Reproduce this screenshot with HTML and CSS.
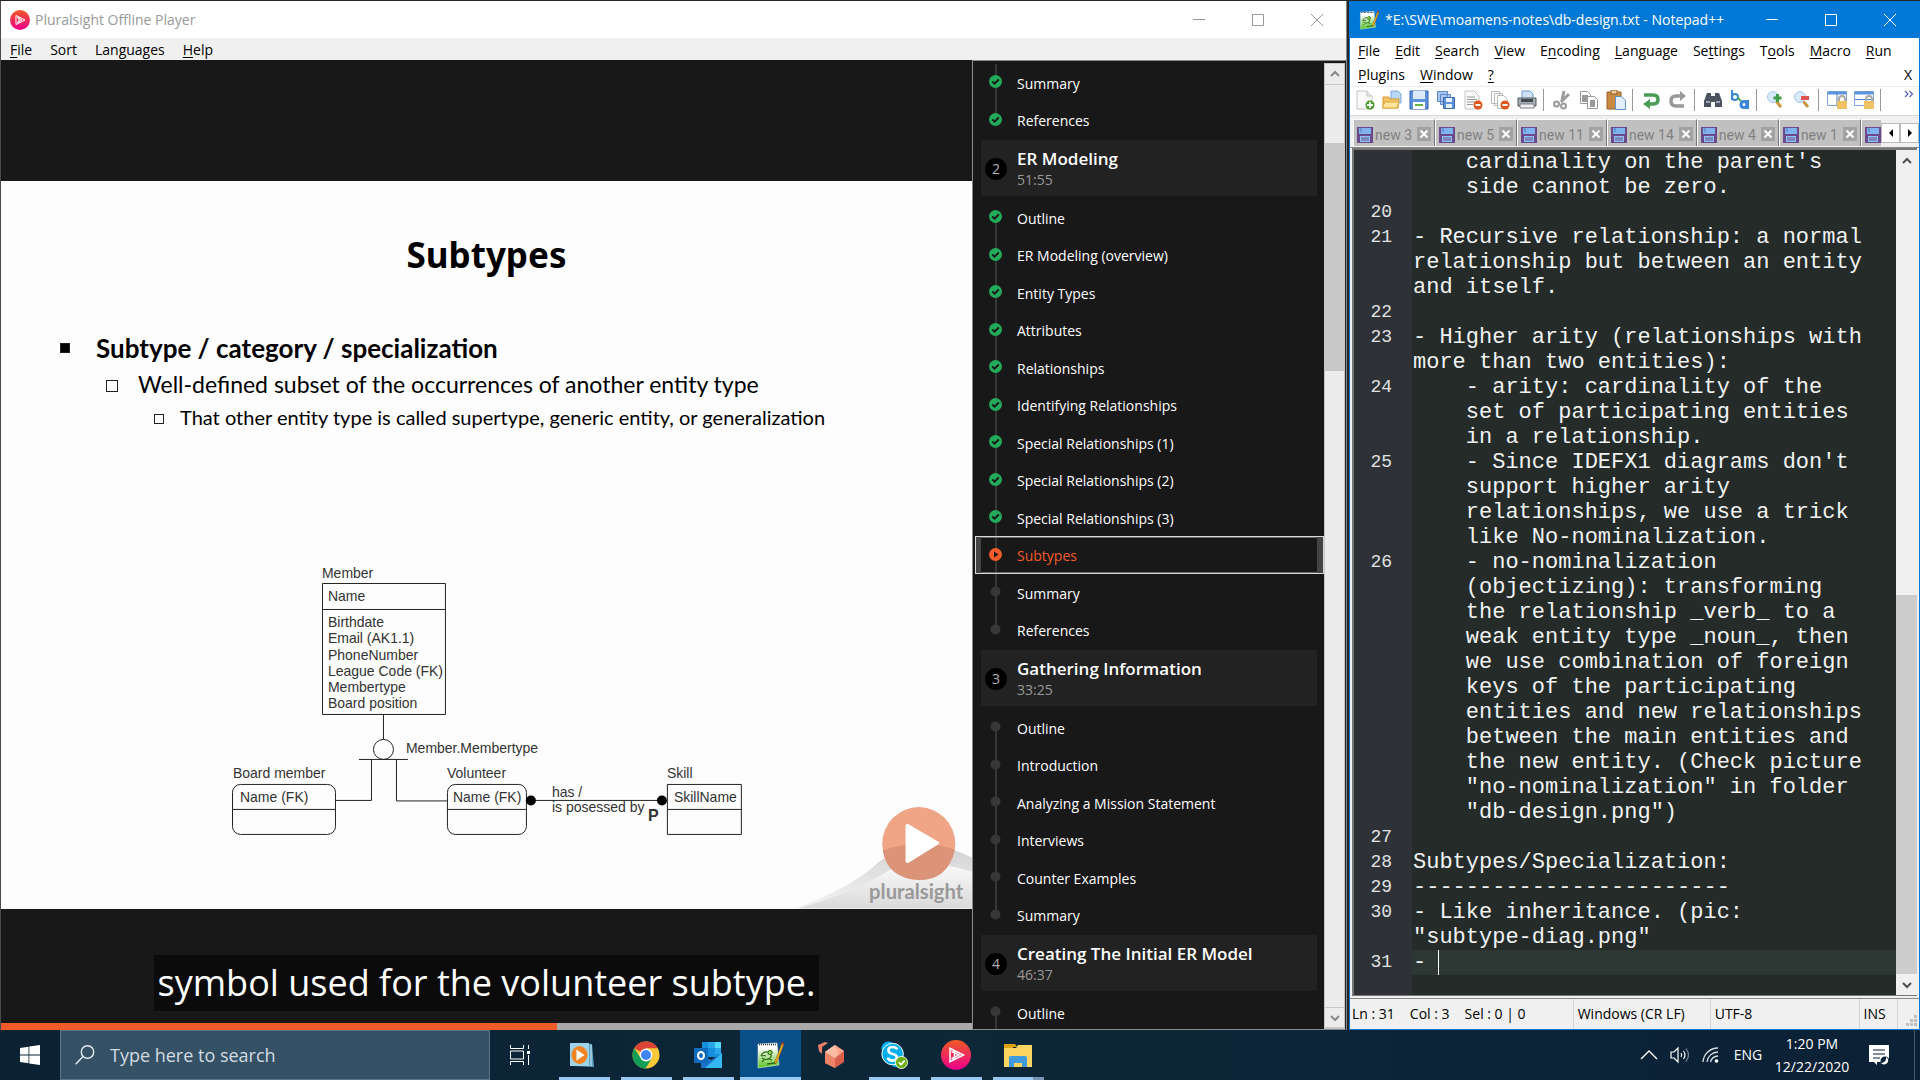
FILE: index.html
```html
<!DOCTYPE html>
<html lang="en">
<head>
<meta charset="utf-8">
<title>Desktop</title>
<link rel="stylesheet" href="styles.css">
</head>
<body>
<svg class="defs" aria-hidden="true">
  <defs>
    <linearGradient id="gPink" x1="0" y1="0" x2="0" y2="1"><stop offset="0" stop-color="#f15a24"/><stop offset="1" stop-color="#ec008c"/></linearGradient>
    <linearGradient id="gHill" x1="0" y1="0" x2="0" y2="1"><stop offset="0" stop-color="#d2d2d2"/><stop offset="1" stop-color="#f4f4f4"/></linearGradient>
    <linearGradient id="gHill2" x1="0" y1="0" x2="0" y2="1"><stop offset="0" stop-color="#fafafa"/><stop offset="1" stop-color="#dadada"/></linearGradient>
    <linearGradient id="gNote" x1="0" y1="0" x2="0" y2="1"><stop offset=".2" stop-color="#fff"/><stop offset="1" stop-color="#58c322"/></linearGradient>
  </defs>
  <symbol id="done" viewBox="0 0 13 13"><circle cx="6.500" cy="6.500" r="6.500" fill="#23aa5a"/><path d="M3.300 6.500l2.300 2.200 4.200-4.200" fill="none" stroke="#181818" stroke-width="1.900"/></symbol>
  <symbol id="now" viewBox="0 0 13 13"><circle cx="6.500" cy="6.500" r="6.500" fill="#f15b2a"/><path d="M5 3.500v6l4.500-3z" fill="#181818"/></symbol>
  <symbol id="todo" viewBox="0 0 13 13"><circle cx="6.500" cy="6.500" r="5" fill="#373737"/></symbol>
  <symbol id="min" viewBox="0 0 12 12"><path d="M0 5.500h12" stroke="currentColor" fill="none"/></symbol>
  <symbol id="max" viewBox="0 0 12 12"><path d="M.5.5h11v11H.5z" stroke="currentColor" fill="none"/></symbol>
  <symbol id="cls" viewBox="0 0 12 12"><path d="M0 0l12 12M12 0L0 12" stroke="currentColor" fill="none"/></symbol>
  <symbol id="up" viewBox="0 0 10 10"><path d="M1 7l4-4 4 4" stroke="currentColor" stroke-width="2" fill="none"/></symbol>
  <symbol id="down" viewBox="0 0 10 10"><path d="M1 3l4 4 4-4" stroke="currentColor" stroke-width="2" fill="none"/></symbol>
  <symbol id="disk" viewBox="0 0 16 16"><path d="M0 0h16v16H0z" fill="#6b4a8c"/><path d="M2 1h12v6H2z" fill="#7fb4ee"/><path d="M3 9h10v6H3z" fill="#8ec4f4"/><path d="M4 11h8M4 13h8" stroke="#6b4a8c"/><path d="M4 1v4" stroke="#5577bb"/></symbol>
  <symbol id="tabx" viewBox="0 0 14 14"><path d="M0 0h14v14H0z" fill="#a2a2a2"/><path d="M3.500 3.500l7 7M10.500 3.500l-7 7" stroke="#fff" stroke-width="2"/></symbol>
  <symbol id="logo" viewBox="0 0 20 20"><circle cx="10" cy="10" r="10" fill="url(#gPink)"/><path d="M6 5.500v9l9-4.500zM7 7.500l5 2.500-5 2.500M9 6.800v6.400" fill="none" stroke="#fff" stroke-width="1"/></symbol>
  <symbol id="npp" viewBox="0 0 28 28"><path d="M2 3l19-1 2 22-21 3z" fill="url(#gNote)" stroke="#dfe8da" stroke-width=".6"/><path d="M3 3.500h18" stroke="#333" stroke-width="1.500" stroke-dasharray="1 1"/><path d="M5 15q2-5 7-4 4-3 4 1l-3 1q4 1 1 4-4 3-8 0M5 15q3-1 5 0M8 19l-2 2M13 18l3 1" fill="none" stroke="#2f6a16" stroke-width="1.200"/><circle cx="14" cy="11.500" r="2" fill="#8fdc4e" stroke="#2f6a16"/><path d="M11 23l8-1" stroke="#2c6a1c" stroke-width="1.500"/><path d="M26 2l2 1-7 18-2 2v-3z" fill="#f0ab1d" stroke="#7a5210" stroke-width=".5"/><path d="M26 1l2 1-.5 2-2-1z" fill="#a33"/></symbol>
</svg>

<main class="desktop">
  <section class="win player" aria-label="Pluralsight Offline Player">
    <header class="titlebar">
      <svg class="appicon"><use href="#logo"/></svg>
      <h1 class="wintitle">Pluralsight Offline Player</h1>
      <div class="winctl">
        <button aria-label="Minimize"><svg><use href="#min"/></svg></button>
        <button aria-label="Maximize"><svg><use href="#max"/></svg></button>
        <button aria-label="Close"><svg><use href="#cls"/></svg></button>
      </div>
    </header>
    <nav class="menubar">
      <button><u>F</u>ile</button><button>Sort</button><button>Languages</button><button><u>H</u>elp</button>
    </nav>
    <div class="playbody">
      <div class="video">
        <div class="band"></div>
        <article class="slide">
          <h2>Subtypes</h2>
          <ul class="bullets">
            <li class="b1">Subtype / category / specialization</li>
            <li class="b2">Well-defined subset of the occurrences of another entity type</li>
            <li class="b3">That other entity type is called supertype, generic entity, or generalization</li>
          </ul>
          <svg class="diagram" viewBox="220 560 540 290">
            <g class="line">
              <path d="M322.500 583.500h123v131h-123zM322.500 609.500h123M383.500 714.500v25M359 759.500h49M371.500 759.500v41h-36M396.500 759.500v41.500h50.500M526 800.500h141M667.500 784.500h74v50h-74zM667.500 809.500h74M233 809.500h102.500M447 809.500h79"/>
              <circle cx="383.500" cy="749.500" r="10"/>
              <rect x="232.500" y="784.500" width="103" height="50" rx="8"/>
              <rect x="447.500" y="784.500" width="79" height="50" rx="8"/>
            </g>
            <circle cx="531" cy="800.500" r="5"/><circle cx="662" cy="800.500" r="5"/>
            <g class="lbl">
              <text x="322" y="578">Member</text><text x="328" y="601">Name</text>
              <text x="328" y="627">Birthdate</text><text x="328" y="643">Email (AK1.1)</text><text x="328" y="660">PhoneNumber</text>
              <text x="328" y="676">League Code (FK)</text><text x="328" y="692">Membertype</text><text x="328" y="708">Board position</text>
              <text x="406" y="753">Member.Membertype</text>
              <text x="233" y="778">Board member</text><text x="240" y="802">Name (FK)</text>
              <text x="447" y="778">Volunteer</text><text x="453" y="802">Name (FK)</text>
              <text x="552" y="797">has /</text><text x="552" y="812">is posessed by</text>
              <text x="667" y="778">Skill</text><text x="674" y="802">SkillName</text>
              <text class="big" x="648" y="821">P</text>
            </g>
          </svg>
          <svg class="brand" viewBox="790 800 182 108">
            <path d="M795 908Q850 890 880 862 920 832 972 858V908z" fill="url(#gHill)"/>
            <path d="M800 908Q860 890 890 870 930 858 972 872V908z" fill="url(#gHill2)"/>
            <circle cx="919" cy="844" r="36" fill="#efa586"/>
            <path d="M883.500 851Q920 838 954.500 850 948 880 919 880 888 878 883.500 851z" fill="#dc9479"/>
            <path d="M906 827q0-3 3-2l29 17q2 1.500 0 3l-29 18q-3 1-3-2z" fill="#fff"/>
            <text x="870" y="899">pluralsight</text>
          </svg>
        </article>
        <div class="lower"><p class="caption">symbol used for the volunteer subtype.</p></div>
        <div class="seek"><div class="seekfill" style="width:57.3%"></div></div>
      </div>
      <aside class="toc">
        <div class="toclist">
          <ul class="clips">
            <li><svg><use href="#done"/></svg><a href="#c">Summary</a></li>
            <li class="last"><svg><use href="#done"/></svg><a href="#c">References</a></li>
          </ul>
          <div class="module"><span class="num">2</span><div><h3>ER Modeling</h3><p>51:55</p></div></div>
          <ul class="clips">
            <li class="first"><svg><use href="#done"/></svg><a href="#c">Outline</a></li>
            <li><svg><use href="#done"/></svg><a href="#c">ER Modeling (overview)</a></li>
            <li><svg><use href="#done"/></svg><a href="#c">Entity Types</a></li>
            <li><svg><use href="#done"/></svg><a href="#c">Attributes</a></li>
            <li><svg><use href="#done"/></svg><a href="#c">Relationships</a></li>
            <li><svg><use href="#done"/></svg><a href="#c">Identifying Relationships</a></li>
            <li><svg><use href="#done"/></svg><a href="#c">Special Relationships (1)</a></li>
            <li><svg><use href="#done"/></svg><a href="#c">Special Relationships (2)</a></li>
            <li><svg><use href="#done"/></svg><a href="#c">Special Relationships (3)</a></li>
            <li class="sel"><svg><use href="#now"/></svg><a href="#c">Subtypes</a></li>
            <li><svg><use href="#todo"/></svg><a href="#c">Summary</a></li>
            <li class="last"><svg><use href="#todo"/></svg><a href="#c">References</a></li>
          </ul>
          <div class="module"><span class="num">3</span><div><h3>Gathering Information</h3><p>33:25</p></div></div>
          <ul class="clips">
            <li class="first"><svg><use href="#todo"/></svg><a href="#c">Outline</a></li>
            <li><svg><use href="#todo"/></svg><a href="#c">Introduction</a></li>
            <li><svg><use href="#todo"/></svg><a href="#c">Analyzing a Mission Statement</a></li>
            <li><svg><use href="#todo"/></svg><a href="#c">Interviews</a></li>
            <li><svg><use href="#todo"/></svg><a href="#c">Counter Examples</a></li>
            <li class="last"><svg><use href="#todo"/></svg><a href="#c">Summary</a></li>
          </ul>
          <div class="module"><span class="num">4</span><div><h3>Creating The Initial ER Model</h3><p>46:37</p></div></div>
          <ul class="clips">
            <li class="first"><svg><use href="#todo"/></svg><a href="#c">Outline</a></li>
          </ul>
        </div>
        <div class="scroll raised">
          <button aria-label="Scroll up"><svg><use href="#up"/></svg></button>
          <div class="gap1"></div><div class="thumb1"></div><div class="rest"></div>
          <button aria-label="Scroll down"><svg><use href="#down"/></svg></button>
        </div>
      </aside>
    </div>
  </section>

  <section class="win notepad" aria-label="Notepad++">
    <header class="titlebar">
      <svg class="appicon"><use href="#npp"/></svg>
      <h1 class="wintitle">*E:\SWE\moamens-notes\db-design.txt - Notepad++</h1>
      <div class="winctl">
        <button aria-label="Minimize"><svg><use href="#min"/></svg></button>
        <button aria-label="Maximize"><svg><use href="#max"/></svg></button>
        <button aria-label="Close"><svg><use href="#cls"/></svg></button>
      </div>
    </header>
    <nav class="menubar">
      <button><u>F</u>ile</button><button><u>E</u>dit</button><button><u>S</u>earch</button><button><u>V</u>iew</button><button>E<u>n</u>coding</button><button><u>L</u>anguage</button><button>Se<u>t</u>tings</button><button>T<u>o</u>ols</button><button><u>M</u>acro</button><button><u>R</u>un</button>
      <span class="break"></span>
      <button><u>P</u>lugins</button><button><u>W</u>indow</button><button><u>?</u></button><button class="closedoc">X</button>
    </nav>
    <div class="toolbar">
      <button aria-label="New"><svg viewBox="0 0 20 20"><path d="M2 1h10l5 5v13H2z" fill="#fafafa" stroke="#c4c4c4"/><path d="M12 1v5h5" fill="#e8e8e8" stroke="#c4c4c4"/><circle cx="15" cy="15" r="4.500" fill="#4a9a2a"/><path d="M15 12v6M12 15h6" stroke="#fff" stroke-width="1.800"/></svg></button>
      <button aria-label="Open"><svg viewBox="0 0 20 20"><path d="M9 1h7l3 3v9H9z" fill="#b8d6f6" stroke="#7ea8da"/><path d="M1 7h6l1 2h9l-1 9H1z" fill="#f3c565" stroke="#d49a30"/><path d="M0 18l3-6h14l-2 6z" fill="#ffe49b" stroke="#dfa83d"/></svg></button>
      <button aria-label="Save"><svg viewBox="0 0 20 20"><path d="M1 1h18v18H1z" fill="#5f92dc" stroke="#2f5fae"/><path d="M4 1h12v8H4z" fill="#dbeafa"/><path d="M4 12h12v7H4z" fill="#fff"/><path d="M6 15h8" stroke="#62b34a" stroke-width="2"/></svg></button>
      <button aria-label="Save all"><svg viewBox="0 0 20 20"><path d="M1.500 1.500h10v10h-10zM4.500 4.500h10v10h-10z" fill="#a9c8f0" stroke="#5c86c8"/><path d="M7.500 7.500h11v11h-11z" fill="#5f92dc" stroke="#3c69b4"/><path d="M10 8h6v4h-6zM10 14h6v4h-6z" fill="#e6f1fc"/></svg></button>
      <button aria-label="Close file"><svg viewBox="0 0 20 20"><path d="M2 1h9l5 5v13H2z" fill="#fafafa" stroke="#c4c4c4"/><path d="M4 7h8M4 9.500h10M4 12h8M4 14.500h6" stroke="#999"/><circle cx="15" cy="15" r="4.500" fill="#e2561c"/><path d="M12.500 15h5" stroke="#fff" stroke-width="2"/></svg></button>
      <button aria-label="Close all"><svg viewBox="0 0 20 20"><path d="M1.500 1.500h8v12h-8zM4.500 3.500h8v12h-8z" fill="#fff" stroke="#bbb"/><path d="M7.500 5.500h6l4 4v9h-10z" fill="#fff" stroke="#bbb"/><circle cx="15" cy="15" r="4.500" fill="#e2561c"/><path d="M12.500 15h5" stroke="#fff" stroke-width="2"/></svg></button>
      <button aria-label="Print"><svg viewBox="0 0 20 20"><path d="M5 1h8l3 3v6H5z" fill="#cfe3f8" stroke="#6d9bd3"/><path d="M1 8h18v8H1z" fill="#a9aeb4" stroke="#50565e"/><path d="M4 9h12v3H4z" fill="#444a52"/><path d="M3 14h14v4H3z" fill="#f1f1f1" stroke="#7a7f86"/></svg></button>
      <i></i>
      <button aria-label="Cut"><svg viewBox="0 0 20 20"><path d="M12 1l-2 9M17 4l-8 8" stroke="#9b9b9b" stroke-width="3"/><g fill="none" stroke="#9b9b9b" stroke-width="2"><circle cx="4.500" cy="14" r="2.500"/><circle cx="11.500" cy="16" r="2.500"/></g></svg></button>
      <button aria-label="Copy"><svg viewBox="0 0 20 20"><path d="M1.500 1.500h7l3 3v9h-10z" fill="#fff" stroke="#999"/><path d="M3 5h6v7H3z" fill="#999"/><path d="M8.500 6.500h7l3 3v9h-10z" fill="#fff" stroke="#999"/><path d="M11 10h5v7h-5z" fill="#999"/></svg></button>
      <button aria-label="Paste"><svg viewBox="0 0 20 20"><path d="M1 2h14v17H1z" fill="#c98a42" stroke="#96602a"/><path d="M5 0h6v4H5z" fill="#e9cf9a" stroke="#96602a"/><path d="M9.500 6.500h6l4 4v9h-10z" fill="#e3effc" stroke="#5f8fd0"/></svg></button>
      <i></i>
      <button aria-label="Undo"><svg viewBox="0 0 20 20"><path d="M3 5h9q5 0 5 4.500T12 14H7" fill="none" stroke="#4a9d55" stroke-width="3.500"/><path d="M9 9v10l-7-5z" fill="#4a9d55"/></svg></button>
      <button aria-label="Redo"><svg viewBox="0 0 20 20"><path d="M14 6H8q-5 0-5 5t5 5h8" fill="none" stroke="#999" stroke-width="3.500"/><path d="M12 1v10l6-5z" fill="#999"/></svg></button>
      <i></i>
      <button aria-label="Find"><svg viewBox="0 0 20 20"><path d="M4 3h4v3h4V3h4l3 8v6h-7v-5H8v5H1v-6z" fill="#4a535f"/><path d="M3 12h4M13 12h4" stroke="#9aa6b5" stroke-width="2"/></svg></button>
      <button aria-label="Replace"><svg viewBox="0 0 20 20"><path d="M2 0v10M2 7q0-3 3-3t3 3-3 3-3-3" fill="none" stroke="#3b86d6" stroke-width="2"/><path d="M17.500 10v9M17 14.500q0-3-3-3t-3 3 3 3 3-3" fill="none" stroke="#3b86d6" stroke-width="3"/><path d="M8 8l3 3" stroke="#55a74b" stroke-width="2"/></svg></button>
      <i></i>
      <button aria-label="Zoom in"><svg viewBox="0 0 20 20"><path d="M11 11l5 6" stroke="#c9963f" stroke-width="3"/><circle cx="8" cy="7" r="5.500" fill="#d8e9fa" stroke="#a9c8ea"/><path d="M12.500 4v8M8.500 8h8" stroke="#3f9b46" stroke-width="3"/></svg></button>
      <button aria-label="Zoom out"><svg viewBox="0 0 20 20"><path d="M11 11l5 6" stroke="#c9963f" stroke-width="3"/><circle cx="8" cy="7" r="5.500" fill="#d8e9fa" stroke="#a9c8ea"/><path d="M9 8h8" stroke="#e05252" stroke-width="4"/></svg></button>
      <i></i>
      <button aria-label="Sync vertical scrolling"><svg viewBox="0 0 20 20"><path d="M.5 1.500h19v14H.5z" fill="#fff" stroke="#7fa6da"/><path d="M1 3h18" stroke="#5a94dc" stroke-width="3"/><path d="M10 3v13" stroke="#4b7fc4"/><path d="M12 11V9q0-3 3-3t3 3v2" fill="none" stroke="#aaa" stroke-width="2"/><path d="M10 11h10v8H10z" fill="#f0c265"/></svg></button>
      <button aria-label="Sync horizontal scrolling"><svg viewBox="0 0 20 20"><path d="M.5 1.500h19v14H.5z" fill="#fff" stroke="#7fa6da"/><path d="M1 3h18" stroke="#5a94dc" stroke-width="3"/><path d="M1 9.500h18" stroke="#4b7fc4"/><path d="M12 11V9q0-3 3-3t3 3v2" fill="none" stroke="#aaa" stroke-width="2"/><path d="M10 11h10v8H10z" fill="#f0c265"/></svg></button>
      <i></i>
      <button class="more" aria-label="More tools"><svg viewBox="0 0 10 10"><path d="M1 1l3 3-3 3M5.500 1l3 3-3 3" fill="none" stroke="#5560b0" stroke-width="1.200"/></svg></button>
    </div>
    <div class="tabs">
      <div class="tablist">
        <button class="tab"><svg><use href="#disk"/></svg>new 3<svg class="x"><use href="#tabx"/></svg></button>
        <button class="tab"><svg><use href="#disk"/></svg>new 5<svg class="x"><use href="#tabx"/></svg></button>
        <button class="tab"><svg><use href="#disk"/></svg>new 11<svg class="x"><use href="#tabx"/></svg></button>
        <button class="tab"><svg><use href="#disk"/></svg>new 14<svg class="x"><use href="#tabx"/></svg></button>
        <button class="tab"><svg><use href="#disk"/></svg>new 4<svg class="x"><use href="#tabx"/></svg></button>
        <button class="tab"><svg><use href="#disk"/></svg>new 1<svg class="x"><use href="#tabx"/></svg></button>
        <button class="tab" aria-label="Next file"><svg><use href="#disk"/></svg></button>
      </div>
      <div class="tabnav">
        <button aria-label="Previous tabs"><svg viewBox="0 0 6 8"><path d="M5 0v8L1 4z"/></svg></button>
        <button aria-label="Next tabs"><svg viewBox="0 0 6 8"><path d="M1 0v8l4-4z"/></svg></button>
      </div>
    </div>
    <div class="editor">
<pre class="gutter" aria-hidden="true">


20
21


22
23

24


25



26










27
28
29
30

31
</pre>
<textarea class="code" aria-label="db-design.txt" spellcheck="false">
    cardinality on the parent's
    side cannot be zero.

- Recursive relationship: a normal
relationship but between an entity
and itself.

- Higher arity (relationships with
more than two entities):
    - arity: cardinality of the
    set of participating entities
    in a relationship.
    - Since IDEFX1 diagrams don't
    support higher arity
    relationships, we use a trick
    like No-nominalization.
    - no-nominalization
    (objectizing): transforming
    the relationship _verb_ to a
    weak entity type _noun_, then
    we use combination of foreign
    keys of the participating
    entities and new relationships
    between the main entities and
    the new entity. (Check picture
    "no-nominalization" in folder
    "db-design.png")

Subtypes/Specialization:
------------------------
- Like inheritance. (pic:
"subtype-diag.png"
- </textarea>
      <div class="scroll flat">
        <button aria-label="Scroll up"><svg><use href="#up"/></svg></button>
        <div class="gap2"></div><div class="thumb2"></div>
        <button aria-label="Scroll down"><svg><use href="#down"/></svg></button>
      </div>
    </div>
    <footer class="status">
      <span class="pos"><span>Ln : 31</span><span>Col : 3</span><span>Sel : 0 | 0</span></span>
      <span class="eol">Windows (CR LF)</span><span class="enc">UTF-8</span><span class="ins">INS</span>
      <svg class="grip" viewBox="0 0 12 12"><path d="M8 0h3v3H8zM4 4h3v3H4zM8 4h3v3H8zM0 8h3v3H0zM4 8h3v3H4zM8 8h3v3H8z" fill="#bfbfbf"/></svg>
    </footer>
  </section>
</main>

<footer class="taskbar">
  <button class="start" aria-label="Start"><svg viewBox="0 0 20 20"><path d="M0 3l8.500-1.300v7.800H0zM9.300 1.500L20 0v9.500H9.300zM0 10.400h8.500v7.900L0 17zM9.300 10.400H20V20L9.300 18.400z" fill="#fff"/></svg></button>
  <label class="search"><svg viewBox="0 0 20 20"><circle cx="12.500" cy="7" r="6.200" fill="none" stroke="#e6edf2" stroke-width="1.400"/><path d="M8 11.500L.7 19.300" stroke="#e6edf2" stroke-width="1.400"/></svg><input type="text" placeholder="Type here to search"></label>
  <button class="view" aria-label="Task view"><svg viewBox="0 0 20 20"><path d="M.5 0v3.500h13V0M.5 20v-3.500h13V20M.5 6h13v8H.5zM18.500 0v4M18.500 10v10" fill="none" stroke="#fff"/><path d="M17 6h3v3h-3z" fill="#fff"/></svg></button>
  <button class="app run" aria-label="Media Player"><svg viewBox="0 0 28 28"><path d="M4 2l18 1 2 23-20-1z" fill="#5ea3c2"/><path d="M0 2h19v23H0z" fill="#9fd3e8"/><path d="M21 4v21" stroke="#cfeaf4"/><ellipse cx="9.500" cy="14" rx="8" ry="9" fill="#f28322"/><path d="M6.500 8.500v11l8-5.500z" fill="#fff"/></svg></button>
  <button class="app run" aria-label="Chrome"><svg viewBox="0 0 28 28"><circle cx="14" cy="14" r="13.500" fill="#f9c938"/><path d="M14 14L2.300 7.200A13.500 13.500 0 0 1 25.700 7.200H14z" fill="#db4437"/><path d="M2.300 7.200A13.500 13.500 0 0 0 13.500 27.500L19.800 17 14 14 8 16z" fill="#109d58"/><circle cx="14" cy="14" r="6.400" fill="#fff"/><circle cx="14" cy="14" r="5" fill="#4285f4"/></svg></button>
  <button class="app run" aria-label="Outlook"><svg viewBox="0 0 28 28"><path d="M8 1h19v15H8z" fill="#1490df"/><path d="M14 1h7v6h-7z" fill="#28a8ea"/><path d="M21 1h6v6h-6z" fill="#50d9ff"/><path d="M21 7h6v6h-6z" fill="#28a8ea"/><path d="M7 13l10 6 11-7v15H7z" fill="#1a73c8"/><path d="M28 12v15H11z" fill="#35b8f1"/><path d="M0 7h14v15H0z" fill="#0f6cbd"/><ellipse cx="7" cy="14.500" rx="3" ry="3.600" fill="none" stroke="#fff" stroke-width="2"/></svg></button>
  <button class="app run active" aria-label="Notepad++"><svg><use href="#npp"/></svg></button>
  <button class="app" aria-label="AWS"><svg viewBox="0 0 28 28"><path d="M7 11l10-7 9 6v11l-9 6-10-5z" fill="#d9604a"/><path d="M7 11l10 6v10l-10-5z" fill="#ee8467"/><path d="M17 4l9 6-9 7-10-6z" fill="#f9a88e"/><path d="M17 4l3 9-3 4-10-6z" fill="#fcbca6"/><path d="M0 4l7-3 3 1-6 4v7l-3-3z" fill="#ef8165"/></svg></button>
  <button class="app run" aria-label="Skype"><svg viewBox="0 0 30 30"><circle cx="9" cy="8" r="7.500" fill="#00aff0"/><circle cx="18" cy="20" r="8" fill="#00aff0"/><circle cx="13.500" cy="14" r="11.500" fill="#00aff0" stroke="#fff"/><path d="M18.500 9q-1.500-2.500-5-2.500-4.500 0-4.500 3.500 0 3 4.500 4t4.500 3.500q0 3.500-4.500 3.500T8.500 18" fill="none" stroke="#fff" stroke-width="2.800"/><circle cx="23" cy="23" r="6.500" fill="#6bb00f" stroke="#fff"/><path d="M20 23l2.500 2.300L26.500 21" fill="none" stroke="#fff" stroke-width="1.800"/></svg></button>
  <button class="app run" aria-label="Pluralsight"><svg class="lg"><use href="#logo"/></svg></button>
  <button class="app run multi" aria-label="File Explorer"><svg viewBox="0 0 28 28"><path d="M0 3h11l2 3h-4v5H0z" fill="#e0a20a"/><path d="M0 7h12l2-3h14v22H0z" fill="#fcd462"/><path d="M5 26v-9q0-2 2-2h14q2 0 2 2v9h-5v-4h-8v4z" fill="#3f9ae0"/></svg></button>
  <div class="tray">
    <button aria-label="Show hidden icons"><svg viewBox="0 0 20 20"><path d="M2 14l8-8 8 8" fill="none" stroke="#fff" stroke-width="1.300"/></svg></button>
    <button aria-label="Volume"><svg viewBox="0 0 20 20"><path d="M1 7h3l4-4v14l-4-4H1z" fill="none" stroke="#fff" stroke-width="1.200"/><path d="M11 8q1.500 2 0 4M13.500 6q3 4 0 8" fill="none" stroke="#fff" stroke-width="1.200"/><path d="M16 3.500q5 6.500 0 13" fill="none" stroke="#7b8b97" stroke-width="1.200"/></svg></button>
    <button aria-label="Network"><svg viewBox="0 0 20 20"><path d="M2 17A15 15 0 0 1 17 3M6 17A11 11 0 0 1 17 7M9.500 17A8 8 0 0 1 17 11" fill="none" stroke="#d5dce1" stroke-width="1.300"/><circle cx="15.500" cy="16" r="1.800" fill="#fff"/></svg></button>
    <button class="lang">ENG</button>
    <time class="clock"><span>1:20 PM</span><span>12/22/2020</span></time>
    <button class="notes" aria-label="Notifications"><svg viewBox="0 0 20 20"><path d="M0 0h20v17H8v3l-3-3H0z" fill="#fff"/><path d="M4 5h12M4 9h12M4 13h7" stroke="#0b2233" stroke-width="1.200"/><circle cx="16" cy="16" r="4.500" fill="#0b2233"/><path d="M17 12a4 4 0 1 1-5 6 5 5 0 0 0 5-6z" fill="#fff"/></svg></button>
  </div>
</footer>
</body>
</html>
```
FILE: styles.css
```css
* { box-sizing: border-box; }
body { margin: 0; height: 100vh; display: flex; flex-direction: column; background: #26282b; font-family: "Open Sans", "Noto Sans", sans-serif; font-size: 14px; line-height: 20px; overflow: hidden; }
h1, h2, h3, p, ul, pre { margin: 0; padding: 0; font-weight: 400; }
ul { list-style: none; }
button { border: 0; padding: 0; background: none; font: inherit; color: inherit; display: flex; align-items: center; justify-content: center; }
a { color: inherit; text-decoration: none; }
u { text-underline-offset: 2px; }
svg { display: block; flex: none; }
.defs { position: absolute; width: 0; height: 0; }

.desktop { flex: 1; display: grid; grid-template-columns: minmax(0, 1347fr) minmax(0, 571fr); grid-template-rows: minmax(0, 1fr); gap: 2px; padding-top: 1px; min-height: 0; }
.win { display: flex; flex-direction: column; min-width: 0; min-height: 0; }
.player { border-left: 1px solid #4a4a4a; border-right: 1px solid #8a8a8a; }
.notepad { border: 1px solid #0078d7; border-width: 0 1px 1px; background: #f0f0f0; }

.titlebar { height: 37px; flex: none; display: flex; align-items: center; padding-left: 9px; background: #fff; color: #999; }
.appicon { width: 20px; height: 20px; margin-right: 5px; }
.wintitle { font-size: 14px; flex: 1; white-space: nowrap; }
.winctl { display: flex; align-self: stretch; }
.winctl button { width: 59px; }
.winctl svg { width: 12px; height: 12px; }
.notepad .titlebar { background: #0078d7; color: #fff; }
.notepad .appicon { margin-right: 6px; }

.menubar { display: flex; align-items: center; gap: 18px; padding: 2px 0 0 9px; background: #f0f0f0; height: 22px; flex: none; }
.notepad .menubar { height: 48px; background: #fff; flex-wrap: wrap; gap: 0 15px; padding: 1px 7px 0 8px; color: #000; align-content: flex-start; }
.notepad .menubar button { height: 24px; }
.break { flex-basis: 100%; height: 0; }
.closedoc { margin-left: auto; }

.playbody { flex: 1; display: grid; grid-template-columns: minmax(0, 971fr) minmax(0, 374fr); grid-template-rows: minmax(0, 1fr); min-height: 0; background: #181818; }
.video { display: flex; flex-direction: column; min-height: 0; }
.band { flex: 120; background: #181818; }
.slide { aspect-ratio: 971 / 728; background: #fdfdfd; color: #000; position: relative; font-family: Lato, "Open Sans", sans-serif; flex: none; }
.slide h2 { padding-top: 52px; text-align: center; font: 700 35px/44px "Noto Sans", sans-serif; }
.bullets { padding: 52px 0 0 93px; }
.bullets li { display: flex; align-items: center; white-space: nowrap; }
.bullets li::before { content: ""; border: 1px solid #222; }
.b1 { font-size: 26px; line-height: 38px; font-weight: 700; margin-left: -34px; }
.bullets .b1::before { width: 8px; height: 8px; background: #000; margin-right: 26px; }
.b2 { font-size: 23px; line-height: 34px; margin-left: 12px; }
.bullets .b2::before { width: 10px; height: 10px; margin: 4px 20px 0 0; }
.b3 { font-size: 20px; line-height: 32px; margin-left: 60px; }
.bullets .b3::before { width: 8px; height: 8px; margin: 4px 16px 0 0; }
.diagram { width: 55.6%; margin: 127px 0 0 22.6%; }
.line { fill: none; stroke: #222; }
.lbl { font: 14px "Liberation Sans", Arial, sans-serif; fill: #333; }
.big { font: 700 16px "Liberation Sans", Arial, sans-serif; }
.brand { position: absolute; right: 0; bottom: 0; width: 19%; }
.brand text { font: 700 20px Lato, sans-serif; fill: #999; }
.lower { flex: 114; display: flex; align-items: flex-end; justify-content: center; background: #181818; min-height: 0; }
.caption { margin-bottom: 12px; background: #0b0b0b; color: #fff; font-size: 36px; line-height: 56px; padding: 0 4px; white-space: nowrap; }
.seek { height: 7px; background: #a9a9a9; flex: none; }
.seekfill { height: 7px; background: #f15b2a; }

.toc { display: flex; border: 1px solid #8a8a8e; border-right-color: #222; min-height: 0; color: #fff; }
.toclist { flex: 1; min-width: 0; overflow: hidden; padding: 0 7px 0 8px; }
.clips { padding: 3px 0 1px; }
.clips li { height: 37px; display: flex; align-items: center; gap: 15px; padding-left: 8px; background: linear-gradient(#373737, #373737) 14px 0 / 2px 100% no-repeat; white-space: nowrap; }
.clips a { padding-top: 2px; }
.clips li:nth-child(even) { height: 38px; }
.clips li.first { background-position: 14px 100%; background-size: 2px 50%; }
.clips li.last { background-size: 2px 50%; }
.clips svg { width: 13px; height: 13px; margin-bottom: 2px; }
.clips li.sel { margin: 0 -7px 0 -6px; padding-left: 13px; border: 1px solid #d8d8d8; box-shadow: inset 5px 0 #444, inset -6px 0 #444, inset 0 0 0 1px #666; background-position: 19px 0; color: #f15b2a; }
.module { height: 56px; display: flex; align-items: center; gap: 10px; background: #222; padding: 2px 0 0 4px; white-space: nowrap; }
.num { width: 22px; height: 22px; border-radius: 50%; background: #000; color: #b0b0b0; text-align: center; line-height: 22px; }
.module h3 { font-size: 17px; font-weight: 600; line-height: 22px; }
.module p { color: #999; }

.scroll { display: flex; flex-direction: column; width: 21px; background: #ececec; flex: none; }
.scroll button { height: 21px; flex: none; color: #888; }
.scroll svg { width: 10px; height: 10px; }
.raised { border: 1px solid #c8c8c8; margin-top: 2px; }
.raised button { border-bottom: 1px solid #c8c8c8; }
.raised button:last-child { border-top: 1px solid #c8c8c8; }
.gap1 { flex: 58; }
.thumb1 { flex: 228; background: #c8c8c8; }
.rest { flex: 636; }

.toolbar { height: 30px; flex: none; display: flex; align-items: center; background: #fff; border-top: 1px solid #ececec; border-bottom: 1px solid #d8d8d8; padding: 0 0 2px 1px; }
.toolbar button { width: 27px; height: 28px; }
.toolbar svg { width: 20px; height: 20px; }
.toolbar i { width: 1px; height: 22px; background: #999; margin: 0 4px 0 3px; }
.toolbar .more { margin-left: auto; width: 20px; align-items: flex-start; }
.toolbar .more svg { width: 10px; height: 10px; margin: 4px 0; }

.tabs { height: 32px; flex: none; display: flex; padding: 3px 0 1px 3px; border-bottom: 1px solid #888; }
.tablist { flex: 1; display: flex; overflow: hidden; }
.tab { background: #c0c0c0; color: #808080; font: 14px/20px Roboto, sans-serif; padding: 4px 3px 0; border-left: 1px solid #fff; border-right: 1px solid #777; border-top: 1px solid #fff; gap: 2px; flex: none; white-space: nowrap; }
.tab svg { width: 16px; height: 16px; }
.tab .x { width: 14px; height: 14px; margin-left: 3px; margin-bottom: 3px; }
.tabnav { display: flex; align-self: center; }
.tabnav button { width: 19px; height: 20px; background: #fff; border: 1px solid #bbb; }
.tabnav svg { width: 6px; height: 8px; }

.editor { flex: 1; display: flex; min-height: 0; margin: 0 2px 2px; border: 1px solid #777; border-width: 2px 0 1px 2px; background: #242b29; }
.gutter { width: 58px; overflow: hidden; background: #2e3236; color: #e0e2e4; font: 18px/25px "Liberation Mono", "Courier New", monospace; text-align: right; padding-right: 20px; }
.code { flex: 1; min-width: 0; border: 0; outline: 0; resize: none; overflow: hidden; padding: 0 0 0 1px; white-space: pre; color: #f1f2f3; font: 22px/25px "Liberation Mono", "Courier New", monospace; background: linear-gradient(#fff, #fff) 26px 800px / 1px 25px no-repeat, linear-gradient(#2d3734, #2d3734) 0 800px / 100% 25px no-repeat, #242b29; }
.flat { background: #f0f0f0; }
.flat button { color: #505050; }
.gap2 { flex: 425; }
.thumb2 { flex: 379; background: #cdcdcd; }

.status { height: 31px; flex: none; display: flex; align-items: stretch; padding-left: 2px; line-height: 30px; white-space: nowrap; border-top: 1px solid #888; }
.status > span { border-right: 1px solid #d4d4d4; padding-left: 4px; }
.status .pos { flex: 224; display: flex; gap: 15px; padding-left: 0; }
.eol { flex: 134; } .enc { flex: 146; } .ins { flex: 34; }
.grip { width: 12px; height: 12px; align-self: flex-end; margin: 0 1px 2px 8px; }

.taskbar { height: 50px; flex: none; display: flex; color: #fff; background: linear-gradient(90deg, #0b2233, #0d2738 50%, #0b2136); }
.start { width: 60px; }
.start svg, .view svg, .search svg, .tray svg { width: 20px; height: 20px; }
.search { width: 430px; display: flex; align-items: center; gap: 15px; padding-left: 14px; background: #345166; border: 1px solid #5b7386; }
.search input { flex: 1; border: 0; outline: 0; background: none; font: 18px/24px "Open Sans", sans-serif; color: #fff; padding: 0; }
.search input::placeholder { color: #d3dbe1; opacity: 1; }
.view { width: 64px; padding-right: 4px; }
.app { width: 62px; background: linear-gradient(#99c9f0, #99c9f0) 5px 100% / 0 3px no-repeat; padding-right: 2px; }
.app svg { width: 28px; height: 28px; }
.app .lg { width: 30px; height: 30px; }
.run { background-size: 51px 3px; }
.active { background: linear-gradient(#99c9f0, #99c9f0) 0 100% / 61px 3px no-repeat, linear-gradient(#084f8a, #084f8a) 0 0 / 61px 100% no-repeat; }
.multi { background: linear-gradient(90deg, #99c9f0 40px, #7896b2 40px) 5px 100% / 51px 3px no-repeat; }
.tray { margin-left: auto; display: flex; align-items: stretch; margin-right: 5px; border-right: 1px solid #44586a; }
.tray button { width: 31px; }
.tray .lang { width: 44px; }
.clock { display: flex; flex-direction: column; width: 84px; margin-right: 5px; text-align: center; line-height: 23px; padding-top: 2px; }
.tray .notes { width: 40px; margin-right: 15px; }
```
